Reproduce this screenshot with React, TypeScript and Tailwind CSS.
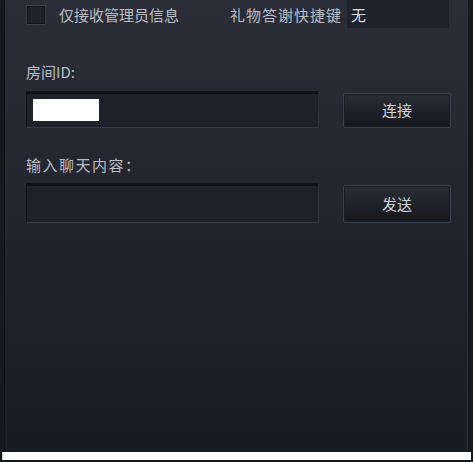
import React from "react";

const font = { fontFamily: '"Noto Sans CJK SC", "Noto Sans", sans-serif' };

function Input({ h, children }: { h: string; children?: React.ReactNode }) {
  return (
    <div
      className={`w-[293px] ${h} border border-[#12141a] border-b-[#343a46] border-r-[#2a2f3a] bg-[#1e2129] shadow-[inset_0_2px_0_#0f1116] flex items-center`}
    >
      {children}
    </div>
  );
}

function Btn({ label, h }: { label: string; h: string }) {
  return (
    <div
      className={`ml-[24px] w-[108px] ${h} rounded-[2px] border border-[#374050] bg-gradient-to-b from-[#2a2d36] to-[#15171c] flex items-center justify-center text-[15px] text-[#d0d4dc] shadow-[inset_0_0_0_1px_#1a1d23]`}
    >
      {label}
    </div>
  );
}

export default function App() {
  return (
    <div className="w-[473px] h-[462px] bg-[#17181c] flex flex-col" style={font}>
      <div className="ml-[4px] mr-[5px] h-[451px] border-l border-[#101114] border-r border-r-[#2c2f37] bg-gradient-to-b from-[#2b2e38] via-[#22252e] to-[#1a1c23] pl-[21px] flex flex-col text-[#b9bdc6]">
        <div className="flex h-[29px]">
          <div className="mt-[5px] w-[20px] h-[20px] bg-[#1f222a] border border-[#3a3e48] shadow-[inset_0_0_0_1px_#15171c]" />
          <div className="ml-[13px] mt-[4px] text-[15px] leading-[22px]">仅接收管理员信息</div>
          <div className="ml-[51px] mt-[4px] text-[15px] leading-[22px] tracking-[1px]">礼物答谢快捷键</div>
          <div className="ml-[4px] w-[104px] h-[29px] border border-[#2a2e38] border-t-0 bg-[#1f222a] text-[15px] leading-[29px] pl-[4px] text-[#d8dbe2]">无</div>
        </div>
        <div className="mt-[32px] text-[15px] leading-[22px]">房间ID:</div>
        <div className="mt-[8px] flex items-start">
          <Input h="h-[37px]">
            <div className="ml-[6px] w-[66px] h-[22px] bg-white" />
          </Input>
          <div className="mt-[2px]">
            <Btn label="连接" h="h-[35px]" />
          </div>
        </div>
        <div className="mt-[26px] text-[15px] leading-[22px] tracking-[1.5px]">输入聊天内容：</div>
        <div className="mt-[7px] flex items-start">
          <Input h="h-[40px]" />
          <div className="mt-[2px]">
            <Btn label="发送" h="h-[38px]" />
          </div>
        </div>
      </div>
      <div className="mx-[2px] mt-[1px] h-[8px] bg-white border-l border-[#cfcfcf]" />
      <div className="h-[1px] bg-[#17181c]" />
    </div>
  );
}
